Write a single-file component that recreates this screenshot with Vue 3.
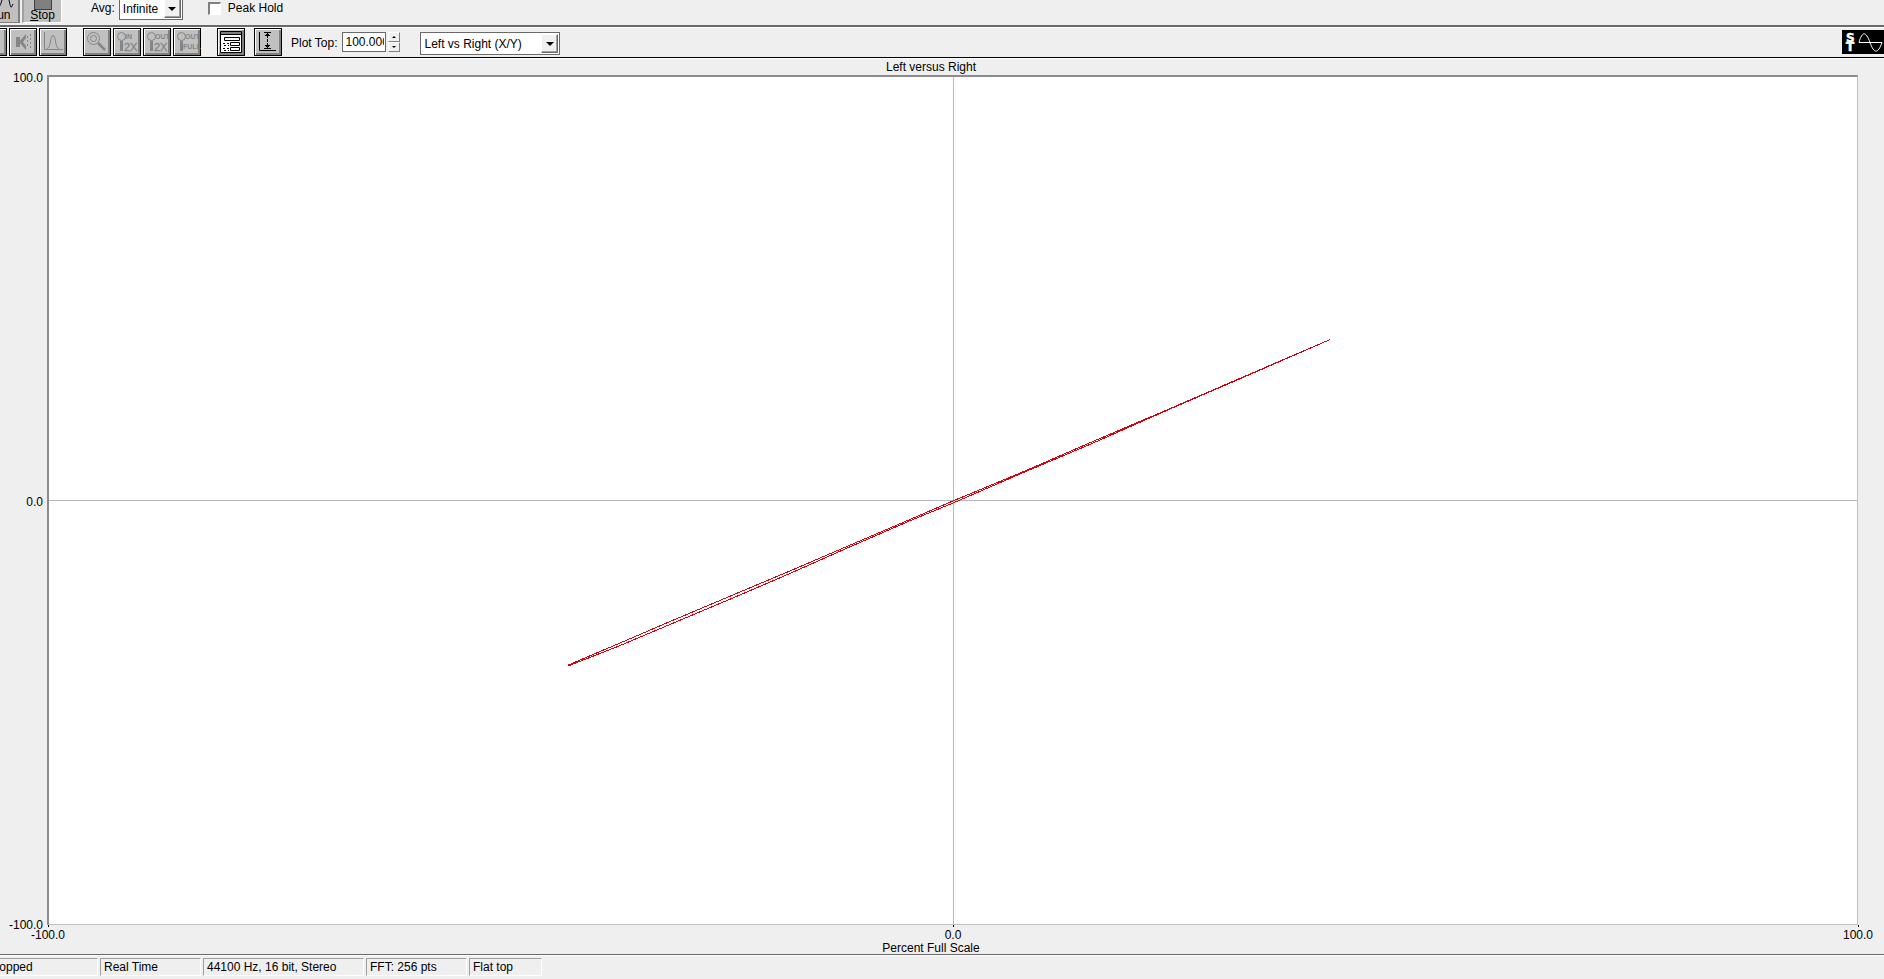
<template>
  <div class="analyzer">
    <header class="run-bar">
      <button type="button" class="run-button">
        <svg class="run-icon" viewBox="0 0 30 22" aria-hidden="true">
          <path d="M3 10 C5 0 8 0 10 10 S14 20 17 10 S22 0 24 10 S26 18 28 14" />
        </svg>
        <span><u>R</u>un</span>
      </button>
      <button type="button" class="run-button pressed">
        <svg class="run-icon" viewBox="0 0 30 22" aria-hidden="true">
          <rect x="6.5" y="2.5" width="17" height="17" class="stop-square" />
        </svg>
        <span><u>S</u>top</span>
      </button>
      <label for="avg" class="avg-label">Avg:</label>
      <div class="select-box avg-select">
        <select id="avg" v-model="avg">
          <option>Infinite</option>
          <option>1</option>
        </select>
        <span class="select-arrow"></span>
      </div>
      <label class="peak">
        <input v-model="peakHold" type="checkbox" />
        Peak Hold
      </label>
    </header>

    <nav class="tool-bar">
      <div class="tool-group first">
        <button type="button" class="tool" disabled aria-label="Record"></button>
        <button type="button" class="tool" disabled aria-label="Speaker">
          <svg viewBox="0 0 28 28">
            <path class="fill" d="M7 9h4v10H7zM10 14l7-8v4l-3 4 3 4v4z" />
            <path d="M18.5 8v12M21.5 6v16" stroke-dasharray="2 2" />
          </svg>
        </button>
        <button type="button" class="tool" disabled aria-label="Smoothing">
          <svg viewBox="0 0 28 28">
            <path d="M5.5 4v17.5H24M8 20.5c4 0 3-13 6-13s2 13 6 13" />
          </svg>
        </button>
      </div>
      <div class="tool-group">
        <button type="button" class="tool" disabled aria-label="Zoom">
          <svg viewBox="0 0 28 28">
            <circle cx="10.5" cy="10.5" r="6" />
            <circle cx="10.5" cy="10.5" r="3" />
            <path d="M15 15l7 7" stroke-width="2.5" />
          </svg>
        </button>
        <button v-for="z in zooms" :key="z.id" type="button" class="tool" disabled :aria-label="z.id">
          <svg viewBox="0 0 28 28">
            <circle cx="8.5" cy="8.5" r="4" />
            <path d="M8.5 13v10" stroke-width="3" />
            <text x="12" y="11" class="glyph-small">{{ z.top }}</text>
            <text v-if="z.big" x="11" y="23" class="glyph-big">{{ z.bottom }}</text>
            <text v-else x="10" y="21" class="glyph-small">{{ z.bottom }}</text>
          </svg>
        </button>
      </div>
      <div class="tool-group">
        <button type="button" class="tool" aria-label="Options">
          <svg viewBox="0 0 28 28">
            <path class="window" d="M3.5 3.5h21v21h-21z" />
            <path d="M4 5h20" stroke="#808080" stroke-width="2" />
            <path d="M3 6.5h22M7.5 9.5h15v3h-15zM13.5 14.5h9v3h-9zM13.5 19.5h9v3h-9z" />
            <path d="M6 15.5h6M7 17.5h5M6 20.5h6M7 22.5h5" stroke-dasharray="2 2" />
          </svg>
        </button>
      </div>
      <button type="button" class="tool fit" aria-label="Fit vertical">
        <svg viewBox="0 0 28 28">
          <path d="M5.5 4v18.5H22M10 4.5h7M10 20.5h7" />
          <path d="M13.5 7v12" stroke-dasharray="3 1" />
          <path d="M11 7.5h5M12 6.5h3M13 5.5h1M11 17.5h5M12 18.5h3M13 19.5h1" />
        </svg>
      </button>
      <label for="plot-top" class="plot-label">Plot Top:</label>
      <input id="plot-top" v-model="plotTop" type="text" class="plot-top" />
      <div class="spinner">
        <button type="button" class="up" aria-label="Increase"></button>
        <button type="button" class="down" aria-label="Decrease"></button>
      </div>
      <div class="select-box view-select">
        <select v-model="view" aria-label="View">
          <option>Left vs Right (X/Y)</option>
          <option>Left</option>
        </select>
        <span class="select-arrow"></span>
      </div>
      <svg class="logo" viewBox="0 0 42 24" aria-label="ST">
        <text x="4" y="12">S</text>
        <text x="4" y="21">T</text>
        <path d="M17 12.5h23M17 12.5C20 1 24 1 28 12.5S36 24 40 12.5" />
      </svg>
    </nav>

    <main class="chart">
      <h1 class="caption title">Left versus Right</h1>
      <div class="chart-body">
        <div class="y-axis">
          <span v-for="t in yTicks" :key="t">{{ t }}</span>
        </div>
        <div class="plot">
          <svg class="trace" viewBox="-100 -100 200 200" preserveAspectRatio="none">
            <path class="grid" d="M-100 0H100M0 -100V100" />
            <polyline :points="upper" />
            <polyline :points="lower" />
          </svg>
        </div>
      </div>
      <div class="x-axis">
        <span v-for="t in xTicks" :key="t">{{ t }}</span>
      </div>
      <p class="caption">Percent Full Scale</p>
    </main>

    <footer class="status">
      <span class="cell state">Stopped</span>
      <span class="cell mode">Real Time</span>
      <span class="cell format">44100 Hz, 16 bit, Stereo</span>
      <span class="cell mode">FFT: 256 pts</span>
      <span class="cell window-type">Flat top</span>
    </footer>
  </div>
</template>

<script setup>
import { ref } from 'vue';

const avg = ref('Infinite');
const peakHold = ref(false);
const plotTop = ref('100.000');
const view = ref('Left vs Right (X/Y)');

const zooms = [
  { id: 'Zoom in 2X', top: 'IN', bottom: '2X', big: true },
  { id: 'Zoom out 2X', top: 'OUT', bottom: '2X', big: true },
  { id: 'Zoom out full', top: 'OUT', bottom: 'FULL', big: false }
];

const yTicks = ['100.0', '0.0', '-100.0'];
const xTicks = ['-100.0', '0.0', '100.0'];

// percent of full scale; y grows downwards
const upper = '-42.6,38.9 -37,33.8 -31,28.3 -24,22 -18,16.6 -12,11.1 -5,4.7 0,0.1 8,-7 15,-13.5 24,-21.7 33,-30 41.7,-38';
const lower = '-42.6,39.1 -37,34.4 -31,29 -24,22.7 -18,17.2 -12,11.5 -5,5 0,0.6 8,-6.8 15,-13.1 24,-21.6 33,-29.9 41.7,-38';
</script>

<style>
body {
  background: #efefef;
}
</style>

<style scoped>
* {
  box-sizing: border-box;
}

.analyzer {
  display: flex;
  flex-direction: column;
  min-height: 100vh;
  overflow: hidden;
  background: #efefef;
  color: #000;
  font: 12px/14px Arial, "Liberation Sans", sans-serif;
}

button,
input,
select {
  margin: 0;
  padding: 0;
  border-radius: 0;
  color: #000;
  font: inherit;
}

/* upper bar, scrolled partly out of view */
.run-bar {
  display: flex;
  align-items: flex-end;
  height: 27px;
  padding-bottom: 2px;
  border-bottom: 2px solid #696969;
  overflow: hidden;
}

.run-button {
  display: flex;
  flex: none;
  flex-direction: column;
  align-items: center;
  justify-content: flex-end;
  width: 40px;
  height: 40px;
  margin-right: 2px;
  border: 1px solid #fff;
  border-right: 2px solid #808080;
  border-bottom: 1px solid #808080;
  background: #c0c0c0;
}

.run-button:first-child {
  margin-left: -20px;
}

.run-button.pressed {
  border: 1px solid #fff;
  border-left: 2px solid #a0a0a0;
}

.run-button span {
  line-height: 13px;
}

.run-icon {
  flex: none;
  width: 30px;
  height: 22px;
  margin-bottom: -3px;
  fill: none;
  stroke: #000;
}

.run-icon .stop-square {
  fill: #808080;
  stroke: #404040;
}

.avg-label {
  margin: 0 4px 8px 27px;
}

.select-box {
  position: relative;
  flex: none;
  height: 23px;
}

.select-box select {
  appearance: none;
  display: block;
  width: 100%;
  height: 100%;
  padding: 0 20px 0 3px;
  border: 1px solid #696969;
  background: #fff;
  outline: none;
}

.select-arrow {
  position: absolute;
  top: 2px;
  right: 2px;
  display: flex;
  align-items: center;
  justify-content: center;
  width: 17px;
  height: 19px;
  border: 1px solid #fff;
  border-right-color: #696969;
  border-bottom-color: #696969;
  background: #f0f0f0;
  box-shadow: inset -1px -1px #a0a0a0;
  pointer-events: none;
}

.select-arrow::after {
  content: "";
  border: 4px solid transparent;
  border-top-color: #000;
  border-bottom: 0;
}

.avg-select {
  width: 64px;
  margin-bottom: 3px;
}

.peak {
  display: flex;
  align-items: center;
  gap: 7px;
  margin: 0 0 8px 25px;
}

.peak input {
  appearance: none;
  width: 13px;
  height: 13px;
  border: 1px solid #fff;
  border-top: 2px solid #808080;
  border-left: 2px solid #808080;
  background: #fff;
}

.tool-bar {
  display: flex;
  align-items: flex-start;
  height: 31px;
  border-top: 1px solid #fff;
  border-bottom: 1px solid #000;
}

.tool-group {
  display: flex;
  gap: 2px;
  margin-right: 16px;
}

.tool-group.first {
  margin-left: -21px;
}

.tool {
  flex: none;
  width: 28px;
  height: 28px;
  border: 1px solid #000;
  background: #c0c0c0;
  box-shadow: inset 1px 1px #fff, inset -2px -2px #808080;
}

.tool svg {
  display: block;
  width: 28px;
  height: 28px;
  margin: -1px;
  fill: none;
  stroke: #000;
}

.tool:disabled svg {
  stroke: #858585;
}

.tool .fill {
  fill: #858585;
  stroke: none;
}

.tool .window {
  fill: #fff;
}

.tool text {
  fill: #858585;
  stroke: none;
  font-family: "Liberation Sans", Arial, sans-serif;
}

.glyph-small {
  font-size: 7px;
  font-weight: 700;
}

.tool .glyph-big {
  font-size: 11px;
  stroke: #858585;
  stroke-width: 0.3px;
}

.fit {
  margin-left: -7px;
}

.plot-label {
  margin: 8px 5px 0 9px;
}

.plot-top {
  width: 44px;
  height: 20px;
  margin-top: 4px;
  padding: 0 1px 0 2px;
  border: 1px solid #696969;
  background: #fff;
  outline: none;
}

.spinner {
  display: flex;
  flex-direction: column;
  width: 12px;
  height: 20px;
  margin: 4px 20px 0 2px;
}

.spinner button {
  display: flex;
  flex: 1;
  align-items: center;
  justify-content: center;
  border: 1px solid #fff;
  border-right-color: #808080;
  border-bottom-color: #808080;
  background: #f0f0f0;
}

.spinner button::after {
  content: "";
  border: 2px solid transparent;
}

.spinner .up::after {
  border-bottom-color: #000;
  border-top: 0;
}

.spinner .down::after {
  border-top-color: #000;
  border-bottom: 0;
}

.view-select {
  width: 140px;
  margin-top: 4px;
}

.logo {
  flex: none;
  width: 42px;
  height: 24px;
  margin: 2px 0 0 auto;
  background: #000;
}

.logo text {
  fill: #fff;
  stroke: #fff;
  stroke-width: 0.5px;
  font: 700 12px "DejaVu Sans", sans-serif;
}

.logo path {
  fill: none;
  stroke: #fff;
}

.chart {
  display: flex;
  flex: 1;
  flex-direction: column;
  border-top: 1px solid #fff;
}

.caption {
  margin: 0;
  padding-right: 22px;
  font-size: 12px;
  font-weight: 400;
  line-height: 12px;
  text-align: center;
}

.caption.title {
  padding-top: 1px;
  line-height: 14px;
}

.chart-body {
  display: flex;
  flex: 1;
  margin: 1px 26px 0 0;
}

.y-axis {
  display: flex;
  flex-direction: column;
  justify-content: space-between;
  width: 47px;
  margin: -4px 0 -7px;
  padding-right: 4px;
  text-align: right;
}

.plot {
  position: relative;
  flex: 1;
  min-height: 200px;
  border-top: 2px solid #8c8c8c;
  border-left: 2px solid #8c8c8c;
  border-right: 1px solid #c0c0c0;
  border-bottom: 1px solid #c0c0c0;
  background: #fff;
}

.trace {
  position: absolute;
  inset: 0;
  width: 100%;
  height: 100%;
  fill: none;
  stroke: #d8000c;
  shape-rendering: crispEdges;
}

.trace * {
  vector-effect: non-scaling-stroke;
}

.trace .grid {
  stroke: #b8b8b8;
}

.x-axis {
  display: flex;
  justify-content: space-between;
  margin: 0 6px 0 28px;
}

.x-axis span {
  width: 40px;
  text-align: center;
}

/* tick mark above each label */
.x-axis span::before {
  content: "";
  display: block;
  width: 1px;
  height: 2px;
  margin: 0 auto 1px;
  background: #000;
}

.status {
  display: flex;
  gap: 2px;
  height: 25px;
  padding: 3px 0;
  border-top: 1px solid #696969;
  box-shadow: inset 0 1px #fff;
}

.cell {
  flex: none;
  height: 18px;
  padding: 1px 3px;
  border: 1px solid #fff;
  border-top-color: #a0a0a0;
  border-left-color: #a0a0a0;
  white-space: nowrap;
}

.state {
  width: 114px;
  margin-left: -16px;
}

.mode {
  width: 101px;
}

.format {
  width: 161px;
}

.window-type {
  width: 73px;
}
</style>
